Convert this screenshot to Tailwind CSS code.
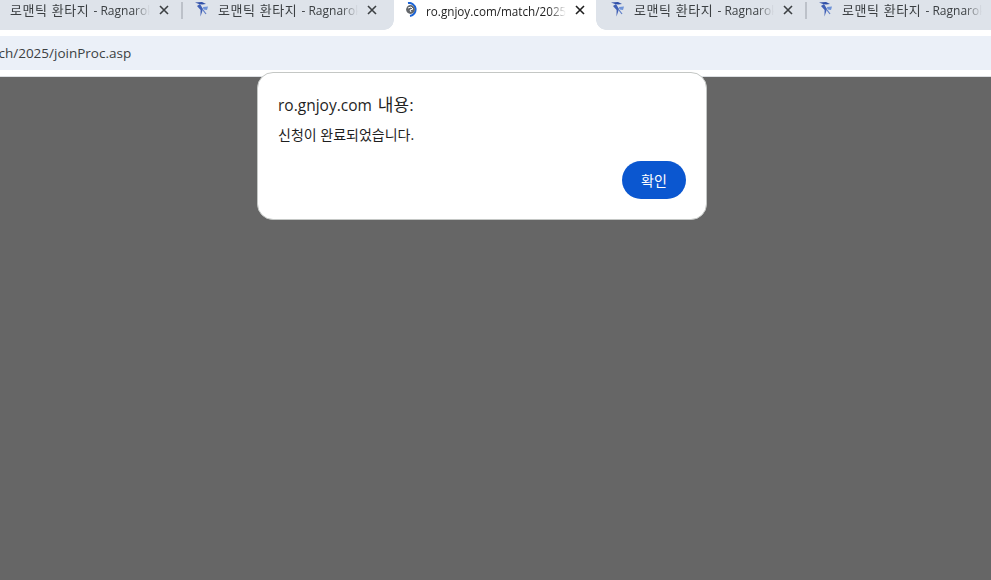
<!DOCTYPE html>
<html lang="ko">
<head>
  <meta charset="UTF-8" />
  <title>ro.gnjoy.com/match/2025/joinProc.asp</title>
  <script src="https://cdn.jsdelivr.net/npm/@tailwindcss/browser@4"></script>
</head>
<body class="relative w-[991px] h-[580px] overflow-hidden bg-[#666666] font-['Open_Sans','Noto_Sans_CJK_KR',sans-serif]">

  <!-- tab strip -->
  <div class="flex h-[30px] bg-[#dee3ea] overflow-hidden">
    <div class="flex shrink-0 -ml-[25px]">

      <div class="relative flex items-center shrink-0 w-[208px] h-[22px] text-[12px] text-[#3c4043]">
        <svg class="absolute left-[11px] top-[1px] w-[17px] h-[17px]" viewBox="0 0 17 17"><path d="M1 1.5 L8 1 L12 3 L8 3.5 L5 3 Z" fill="#2f4fa8"/><path d="M6 3 L9 8 L6.5 15.5 L6.6 9 L3 5 Z" fill="#3f5fb5"/><path d="M9 6 L14 5.5 L13 9 L9.5 8.5 Z" fill="#6f93d8"/><path d="M9 9 L12 13" stroke="#5f7fc8" stroke-width="1.2"/></svg>
        <span class="ml-[35px] w-[140px] whitespace-nowrap overflow-hidden [mask-image:linear-gradient(to_right,black_88%,transparent)]"><span class="text-[13px] tracking-[0.6px] mr-[1px]">로맨틱 환타지</span> - Ragnarok Online</span>
        <svg class="absolute left-[184px] top-[5px] w-[10px] h-[10px]" viewBox="0 0 10 10"><path d="M1 1 L9 9 M9 1 L1 9" stroke="#3c4043" stroke-width="1.6"/></svg>
        <span class="absolute right-0 top-[2px] w-[2px] h-[17px] bg-[#bcc1c9]"></span>
      </div>

      <div class="relative flex items-center shrink-0 w-[208px] h-[22px] text-[12px] text-[#3c4043]">
        <svg class="absolute left-[11px] top-[1px] w-[17px] h-[17px]" viewBox="0 0 17 17"><path d="M1 1.5 L8 1 L12 3 L8 3.5 L5 3 Z" fill="#2f4fa8"/><path d="M6 3 L9 8 L6.5 15.5 L6.6 9 L3 5 Z" fill="#3f5fb5"/><path d="M9 6 L14 5.5 L13 9 L9.5 8.5 Z" fill="#6f93d8"/><path d="M9 9 L12 13" stroke="#5f7fc8" stroke-width="1.2"/></svg>
        <span class="ml-[35px] w-[140px] whitespace-nowrap overflow-hidden [mask-image:linear-gradient(to_right,black_88%,transparent)]"><span class="text-[13px] tracking-[0.6px] mr-[1px]">로맨틱 환타지</span> - Ragnarok Online</span>
        <svg class="absolute left-[184px] top-[5px] w-[10px] h-[10px]" viewBox="0 0 10 10"><path d="M1 1 L9 9 M9 1 L1 9" stroke="#3c4043" stroke-width="1.6"/></svg>
      </div>

      <!-- active tab -->
      <div class="relative shrink-0 w-[208px] h-[30px] px-[3px]">
        <div class="relative flex items-start h-[30px] bg-white text-[11.7px] text-[#1f1f1f]">
          <span class="absolute -left-[10px] bottom-0 w-[10px] h-[10px] bg-[radial-gradient(circle_at_0_0,transparent_9.5px,white_10px)]"></span>
          <span class="absolute -right-[10px] bottom-0 w-[10px] h-[10px] bg-[radial-gradient(circle_at_100%_0,transparent_9.5px,white_10px)]"></span>
          <svg class="absolute left-[10px] top-[2px] w-[15px] h-[15px]" viewBox="0 0 15 15">
            <path d="M4 1 A6.5 6.5 0 1 1 6 14" fill="none" stroke="#1a63d6" stroke-width="2"/>
            <circle cx="6.5" cy="7.5" r="4.4" fill="#63676b"/>
            <path d="M4 6 L7 5 L9 7 L6 8 L7 10" fill="none" stroke="#fff" stroke-width="1"/>
          </svg>
          <span class="ml-[32px] mt-[2px] h-[18px] leading-[18px] w-[140px] whitespace-nowrap overflow-hidden [mask-image:linear-gradient(to_right,black_88%,transparent)]">ro.gnjoy.com/match/2025/joinProc.asp</span>
          <svg class="absolute left-[181px] top-[5px] w-[10px] h-[10px]" viewBox="0 0 10 10"><path d="M1 1 L9 9 M9 1 L1 9" stroke="#1f1f1f" stroke-width="1.6"/></svg>
        </div>
      </div>

      <div class="relative flex items-center shrink-0 w-[208px] h-[22px] text-[12px] text-[#3c4043]">
        <svg class="absolute left-[11px] top-[1px] w-[17px] h-[17px]" viewBox="0 0 17 17"><path d="M1 1.5 L8 1 L12 3 L8 3.5 L5 3 Z" fill="#2f4fa8"/><path d="M6 3 L9 8 L6.5 15.5 L6.6 9 L3 5 Z" fill="#3f5fb5"/><path d="M9 6 L14 5.5 L13 9 L9.5 8.5 Z" fill="#6f93d8"/><path d="M9 9 L12 13" stroke="#5f7fc8" stroke-width="1.2"/></svg>
        <span class="ml-[35px] w-[140px] whitespace-nowrap overflow-hidden [mask-image:linear-gradient(to_right,black_88%,transparent)]"><span class="text-[13px] tracking-[0.6px] mr-[1px]">로맨틱 환타지</span> - Ragnarok Online</span>
        <svg class="absolute left-[184px] top-[5px] w-[10px] h-[10px]" viewBox="0 0 10 10"><path d="M1 1 L9 9 M9 1 L1 9" stroke="#3c4043" stroke-width="1.6"/></svg>
        <span class="absolute right-0 top-[2px] w-[2px] h-[17px] bg-[#bcc1c9]"></span>
      </div>

      <div class="relative flex items-center shrink-0 w-[208px] h-[22px] text-[12px] text-[#3c4043]">
        <svg class="absolute left-[11px] top-[1px] w-[17px] h-[17px]" viewBox="0 0 17 17"><path d="M1 1.5 L8 1 L12 3 L8 3.5 L5 3 Z" fill="#2f4fa8"/><path d="M6 3 L9 8 L6.5 15.5 L6.6 9 L3 5 Z" fill="#3f5fb5"/><path d="M9 6 L14 5.5 L13 9 L9.5 8.5 Z" fill="#6f93d8"/><path d="M9 9 L12 13" stroke="#5f7fc8" stroke-width="1.2"/></svg>
        <span class="ml-[35px] w-[140px] whitespace-nowrap overflow-hidden [mask-image:linear-gradient(to_right,black_88%,transparent)]"><span class="text-[13px] tracking-[0.6px] mr-[1px]">로맨틱 환타지</span> - Ragnarok Online</span>
        <svg class="absolute left-[184px] top-[5px] w-[10px] h-[10px]" viewBox="0 0 10 10"><path d="M1 1 L9 9 M9 1 L1 9" stroke="#3c4043" stroke-width="1.6"/></svg>
      </div>

    </div>
  </div>

  <!-- toolbar -->
  <div class="h-[47px] bg-white pt-[6px] border-b border-[#dcdfe3]">
    <div class="h-[34px] bg-[#ebf0f8] flex items-center overflow-hidden">
      <span class="-ml-[113px] text-[13.5px] text-[#3c4043] whitespace-nowrap">ro.gnjoy.com/match/2025/joinProc.asp</span>
    </div>
  </div>

  <!-- alert dialog -->
  <div class="absolute left-[257px] top-[72px] w-[450px] h-[148px] bg-white rounded-[16px] border border-[#c4c7c5] pl-[20px] pr-[20px] pt-[21px]">
    <div class="text-[15.5px] leading-[22px] text-[#1f1f1f]">ro.gnjoy.com <span class="ml-[2px] text-[17px]">내용:</span></div>
    <div class="mt-[10px] text-[14px] leading-[18px] text-[#1f1f1f]">신청이 완료되었습니다.</div>
    <div class="flex justify-end mt-[17px]">
      <button class="w-[64px] h-[38px] rounded-full bg-[#0b57d0] text-white text-[14px]">확인</button>
    </div>
  </div>

</body>
</html>
